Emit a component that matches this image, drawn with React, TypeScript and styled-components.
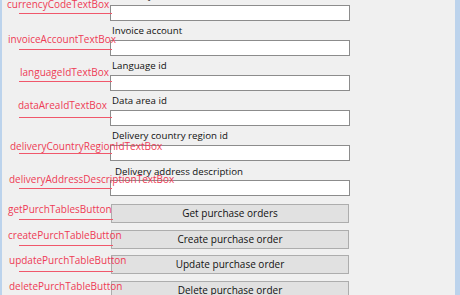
import React from "react";
import styled, { createGlobalStyle } from "styled-components";

const GlobalStyle = createGlobalStyle`
  html, body {
    margin: 0;
    padding: 0;
    background: #f0f0f0;
    overflow: hidden;
  }
  * { box-sizing: border-box; }
`;

const Frame = styled.div`
  display: flex;
  width: 460px;
  height: 295px;
  overflow: hidden;
  background: #f0f0f0;
  font-family: "Open Sans", "Noto Sans", sans-serif;
`;

const Edge = styled.div<{ $w: number }>`
  flex: 0 0 ${(p) => p.$w}px;
  background: #bcd3ec;
`;

const Content = styled.div`
  flex: 1;
  display: flex;
  flex-direction: column;
  margin-top: -14px;
`;

const FieldRow = styled.div`
  display: grid;
  grid-template-columns: 108px 240px;
  grid-template-rows: 19px 16px;
`;

const Label = styled.div<{ $indent: number; $drop: number }>`
  grid-column: 2;
  grid-row: 1;
  padding-left: ${(p) => 2 + p.$indent}px;
  padding-top: ${(p) => p.$drop}px;
  font-size: 9.7px;
  line-height: 19px;
  color: #111111;
  white-space: nowrap;
`;

const TextBox = styled.div`
  grid-column: 2;
  grid-row: 2;
  background: #ffffff;
  border: 1px solid #8c8c8c;
`;

const Annotation = styled.div<{ $x: number; $gap: number; $pad: number }>`
  grid-column: 1;
  grid-row: 1 / span 2;
  position: relative;
  z-index: 1;
  display: flex;
  flex-direction: column;
  justify-content: flex-end;
  padding-bottom: ${(p) => p.$pad}px;
  overflow: visible;

  span {
    display: block;
    padding-left: ${(p) => p.$x - 2}px;
    margin-bottom: ${(p) => Math.max(0, p.$gap - 3)}px;
    font-size: 10px;
    line-height: 11px;
    color: #ee3b55;
    white-space: nowrap;
  }

  i {
    display: block;
    height: 1px;
    margin-left: 17px;
    margin-right: -2px;
    background: #f0576b;
  }
`;

const ButtonList = styled.div`
  display: flex;
  flex-direction: column;
  gap: 6.5px;
  margin-top: 8px;
`;

const ButtonRow = styled.div`
  display: grid;
  grid-template-columns: 109px 238px;
  height: 19px;
`;

const ActionButton = styled.button`
  grid-column: 2;
  grid-row: 1;
  height: 19px;
  margin: 0;
  padding: 0;
  background: #e1e1e1;
  border: 1px solid #adadad;
  font-family: "Open Sans", "Noto Sans", sans-serif;
  font-size: 10px;
  color: #111111;
  line-height: 17px;
`;

type Field = {
  label: string;
  name: string;
  x: number;
  gap: number;
  line: number;
  indent?: number;
  drop?: number;
};

const fields: Field[] = [
  { label: "Currency code", name: "currencyCodeTextBox", x: 7, gap: 6, line: 8 },
  { label: "Invoice account", name: "invoiceAccountTextBox", x: 8, gap: 7, line: 9 },
  { label: "Language id", name: "languageIdTextBox", x: 20, gap: 6, line: 6 },
  { label: "Data area id", name: "dataAreaIdTextBox", x: 18, gap: 9, line: 7 },
  { label: "Delivery country region id", name: "deliveryCountryRegionIdTextBox", x: 10, gap: 4, line: 8 },
  {
    label: "Delivery address description",
    name: "deliveryAddressDescriptionTextBox",
    x: 9,
    gap: 6,
    line: 8,
    indent: 3,
    drop: 1,
  },
];

type Action = { text: string; name: string; x: number; gap: number; line: number };

const actions: Action[] = [
  { text: "Get purchase orders", name: "getPurchTablesButton", x: 8, gap: 7, line: 9 },
  { text: "Create purchase order", name: "createPurchTableButton", x: 8, gap: 7, line: 9 },
  { text: "Update purchase order", name: "updatePurchTableButton", x: 9, gap: 8, line: 9 },
  { text: "Delete purchase order", name: "deletePurchTableButton", x: 9, gap: 7, line: 8 },
];

export default function App() {
  return (
    <>
      <GlobalStyle />
      <Frame>
        <Edge $w={2} />
        <Content>
          {fields.map((f) => (
            <FieldRow key={f.name}>
              <Label $indent={f.indent ?? 0} $drop={f.drop ?? 0}>
                {f.label}
              </Label>
              <TextBox />
              <Annotation $x={f.x} $gap={f.gap} $pad={16 - f.line - 1}>
                <span>{f.name}</span>
                <i />
              </Annotation>
            </FieldRow>
          ))}
          <ButtonList>
            {actions.map((a) => (
              <ButtonRow key={a.name}>
                <ActionButton type="button">{a.text}</ActionButton>
                <Annotation $x={a.x} $gap={a.gap} $pad={19 - a.line - 1}>
                  <span>{a.name}</span>
                  <i />
                </Annotation>
              </ButtonRow>
            ))}
          </ButtonList>
        </Content>
        <Edge $w={5} style={{ marginLeft: "auto" }} />
      </Frame>
    </>
  );
}
